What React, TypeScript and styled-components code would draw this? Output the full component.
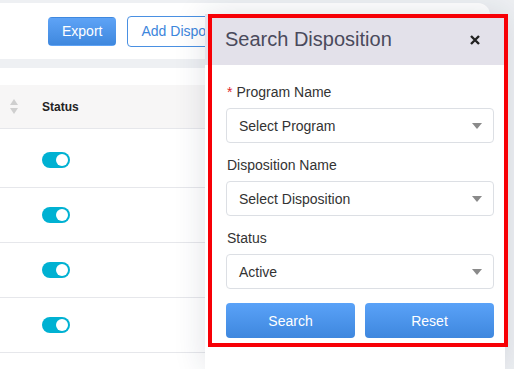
import styled, { createGlobalStyle } from 'styled-components';

const GlobalStyle = createGlobalStyle`
  html, body {
    margin: 0;
    padding: 0;
    font-family: "Liberation Sans", Arial, sans-serif;
  }
`;

const Page = styled.div`
  position: relative;
  width: 514px;
  height: 369px;
  overflow: hidden;
  background: #eef0f3;
`;

const Main = styled.div`
  width: 490px;
  display: flex;
  flex-direction: column;
`;

const TopBar = styled.div`
  margin-top: 3px;
  height: 56px;
  background: #fff;
  border-top-right-radius: 12px;
  display: flex;
  align-items: center;
  gap: 11px;
  padding-left: 48px;
`;

const Button = styled.button<{ $outline?: boolean }>`
  height: ${({ $outline }) => ($outline ? '31px' : '29px')};
  padding: 0 13px;
  border-radius: 4px;
  font-family: inherit;
  font-size: 14px;
  white-space: nowrap;
  border: 1px solid ${({ $outline }) => ($outline ? '#4a90e2' : 'transparent')};
  color: ${({ $outline }) => ($outline ? '#3d86dc' : '#fff')};
  background: ${({ $outline }) =>
    $outline ? '#fff' : 'linear-gradient(#5ea3f6, #3f88de)'};
`;

const TableCard = styled.div`
  margin-top: 9px;
  background: #fff;
  padding-top: 17px;
`;

const HeadRow = styled.div`
  height: 43px;
  background: #f7f6f6;
  display: flex;
  align-items: center;
  border-bottom: 1px solid #e6e7eb;
`;

const SortIcon = styled.div`
  width: 42px;
  display: flex;
  justify-content: center;
  padding-right: 14px;
  box-sizing: border-box;
  color: #cfcfcf;
`;

const HeadCell = styled.div`
  font-size: 12px;
  font-weight: bold;
  color: #222;
`;

const Body = styled.div`
  padding-top: 4px;
`;

const Row = styled.div`
  height: 54px;
  display: flex;
  align-items: center;
  padding-left: 42px;
  border-bottom: 1px solid #e6e7eb;
`;

const Toggle = styled.div`
  width: 28px;
  height: 16px;
  border-radius: 8px;
  background: #00b1d2;
  display: flex;
  align-items: center;
  justify-content: flex-end;
  padding-right: 2px;
  box-sizing: border-box;
  &::after {
    content: '';
    width: 12px;
    height: 12px;
    border-radius: 50%;
    background: #fff;
  }
`;

const Drawer = styled.div`
  position: absolute;
  left: 205px;
  top: 14px;
  bottom: 0;
  width: 300px;
  background: #fff;
  box-shadow: 0 0 30px rgba(30, 40, 70, 0.14);
  display: flex;
  flex-direction: column;
`;

const DrawerHeader = styled.div`
  height: 51px;
  background: #e3e1ea;
  display: flex;
  align-items: center;
  justify-content: space-between;
  padding: 0 25px 0 20px;
  flex-shrink: 0;
`;

const Title = styled.div`
  font-size: 20px;
  color: #4a4a5c;
`;

const DrawerBody = styled.div`
  padding: 17px 11px 0 21px;
  display: flex;
  flex-direction: column;
`;

const Field = styled.div`
  display: flex;
  flex-direction: column;
  margin-bottom: 12px;
`;

const Label = styled.div`
  font-size: 14px;
  line-height: 20px;
  color: #333;
  margin-bottom: 6px;
  padding-left: 1px;
`;

const Required = styled.span`
  color: #e0252b;
  margin-right: 4px;
`;

const Select = styled.div`
  height: 35px;
  box-sizing: border-box;
  border: 1px solid #dcdfe4;
  border-radius: 4px;
  display: flex;
  align-items: center;
  justify-content: space-between;
  padding: 0 11px 0 12px;
  font-size: 14px;
  color: #333;
`;

const Actions = styled.div`
  display: grid;
  grid-template-columns: 1fr 1fr;
  gap: 10px;
  margin-top: 2px;
`;

const ActionButton = styled.button`
  height: 35px;
  border: none;
  border-radius: 4px;
  background: linear-gradient(#5aa2f8, #3e87de);
  color: #fff;
  font-family: inherit;
  font-size: 14px;
`;

const Annotation = styled.div`
  position: absolute;
  left: 208px;
  top: 14px;
  width: 300px;
  height: 333px;
  box-sizing: border-box;
  border: 4px solid #f70006;
  pointer-events: none;
`;

const Caret = () => (
  <svg width="10" height="6" viewBox="0 0 10 6">
    <path d="M0 0 H10 L5 6 Z" fill="#8a8a8a" />
  </svg>
);

const SelectBox = ({ label, value, required }: { label: string; value: string; required?: boolean }) => (
  <Field>
    <Label>
      {required && <Required>*</Required>}
      {label}
    </Label>
    <Select>
      {value}
      <Caret />
    </Select>
  </Field>
);

export default function App() {
  return (
    <>
      <GlobalStyle />
      <Page>
        <Main>
          <TopBar>
            <Button>Export</Button>
            <Button $outline>Add Disposition</Button>
          </TopBar>
          <TableCard>
            <HeadRow>
              <SortIcon>
                <svg width="8" height="16" viewBox="0 0 8 16">
                  <path d="M4 0 L8 6 H0 Z M0 9 H8 L4 15 Z" fill="currentColor" />
                </svg>
              </SortIcon>
              <HeadCell>Status</HeadCell>
            </HeadRow>
            <Body>
              {[0, 1, 2, 3, 4].map((i) => (
                <Row key={i}>
                  <Toggle />
                </Row>
              ))}
            </Body>
          </TableCard>
        </Main>

        <Drawer>
          <DrawerHeader>
            <Title>Search Disposition</Title>
            <svg width="10" height="10" viewBox="0 0 10 10">
              <path d="M1 1 L9 9 M9 1 L1 9" stroke="#222" strokeWidth="2.4" />
            </svg>
          </DrawerHeader>
          <DrawerBody>
            <SelectBox label="Program Name" value="Select Program" required />
            <SelectBox label="Disposition Name" value="Select Disposition" />
            <SelectBox label="Status" value="Active" />
            <Actions>
              <ActionButton>Search</ActionButton>
              <ActionButton>Reset</ActionButton>
            </Actions>
          </DrawerBody>
        </Drawer>

        <Annotation />
      </Page>
    </>
  );
}
